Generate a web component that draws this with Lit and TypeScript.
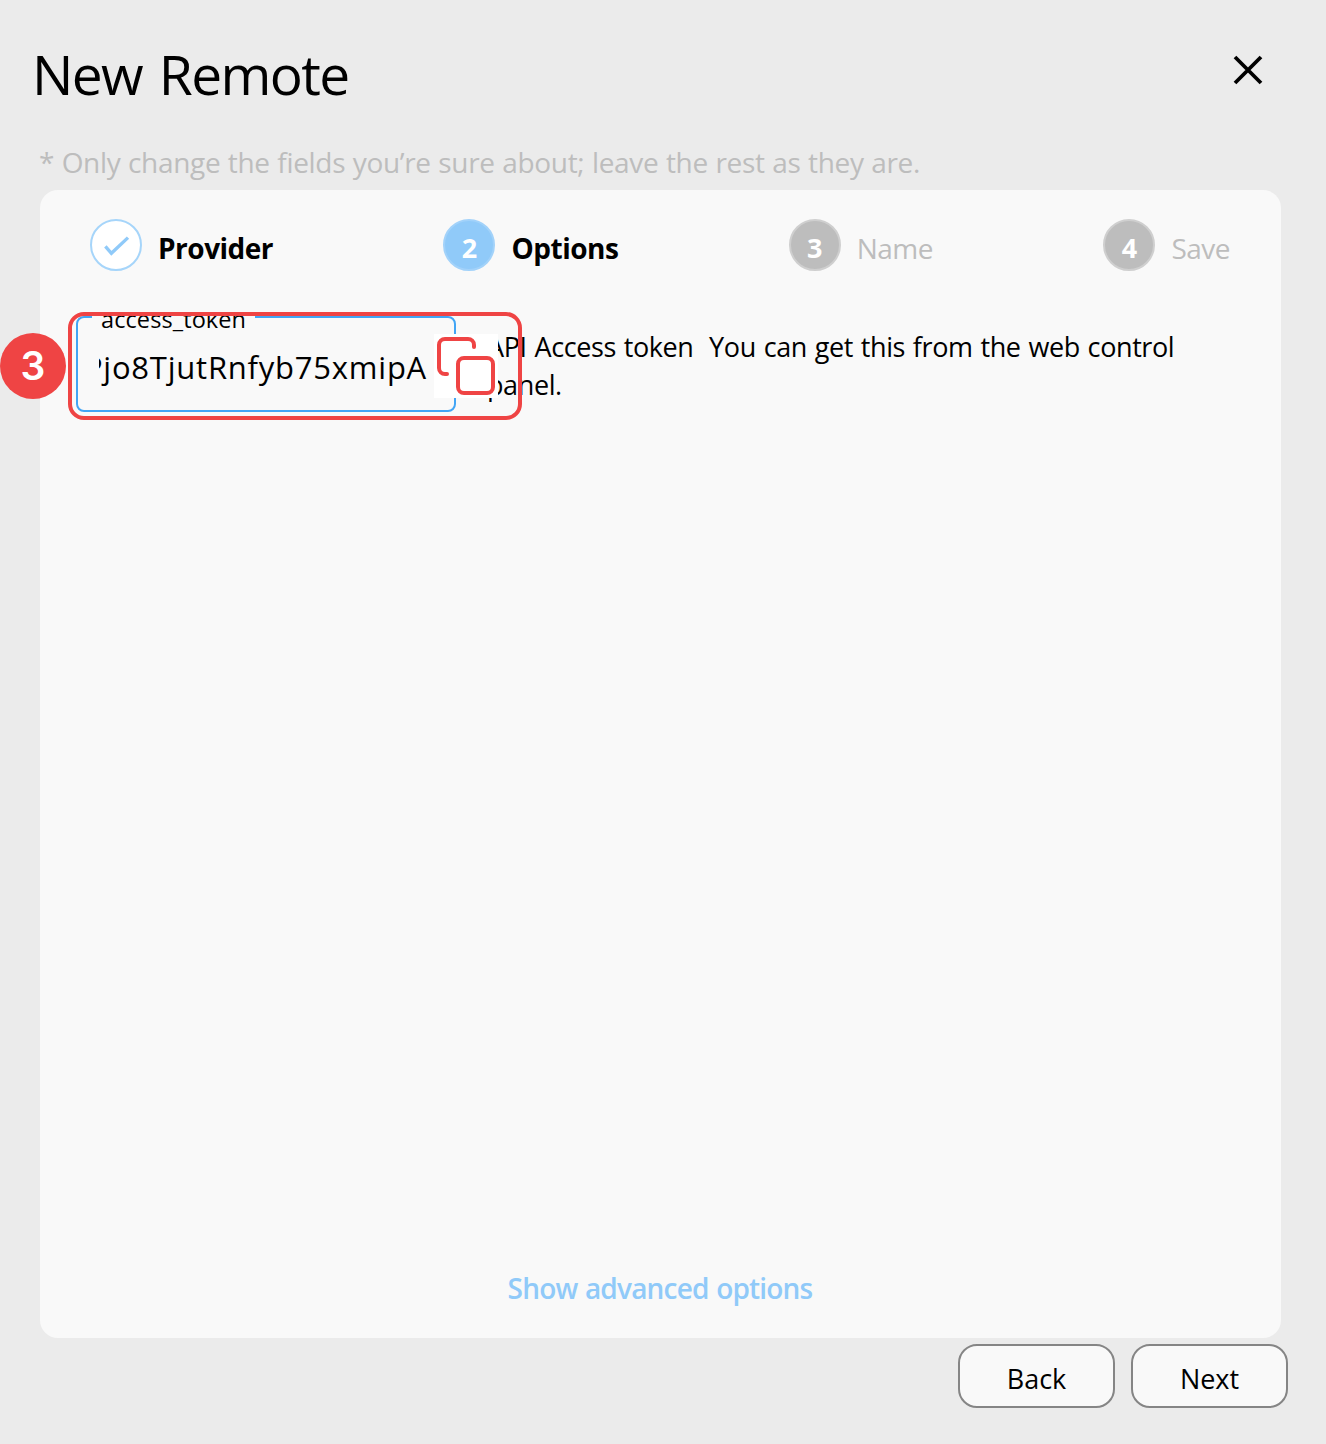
import { LitElement, html, css, svg } from "lit";
import { customElement } from "lit/decorators.js";

type Step = { label: string; state: "done" | "active" | "todo" };

const STEPS: Step[] = [
  { label: "Provider", state: "done" },
  { label: "Options", state: "active" },
  { label: "Name", state: "todo" },
  { label: "Save", state: "todo" },
];

const check = svg`<path d="M14.5 27.5 L21 35 L39 18" fill="none" stroke="#90caf9" stroke-width="3.6"/>`;

@customElement("app-root")
export class AppRoot extends LitElement {
  static styles = css`
    :host {
      display: block;
      font-family: "Open Sans", "Noto Sans", sans-serif;
      color: #000;
    }
    * { box-sizing: border-box; }
    .page {
      width: 1326px;
      height: 1444px;
      background: #ebebeb;
      display: flex;
      flex-direction: column;
      overflow: hidden;
    }
    .header {
      height: 150px;
      padding: 35px 61px 0 32px;
      display: flex;
      justify-content: space-between;
      align-items: flex-start;
    }
    .title {
      margin: 0;
      font-size: 55px;
      line-height: 78px;
      font-weight: 400;
      letter-spacing: -1.6px;
      word-spacing: 4px;
      white-space: nowrap;
    }
    .close {
      display: block;
      width: 34px;
      height: 34px;
      margin-top: 18px;
    }
    .note {
      height: 40px;
      padding-left: 39px;
      margin: 0;
      font-size: 28px;
      line-height: 24px;
      letter-spacing: -0.32px;
      word-spacing: 0.6px;
      color: #bdbdbd;
      white-space: nowrap;
    }
    .panel {
      position: relative;
      height: 1148px;
      margin: 0 45px 0 40px;
      background: #f9f9f9;
      border-radius: 18px;
      display: flex;
      flex-direction: column;
    }
    .steps {
      display: flex;
      justify-content: space-between;
      padding: 29px 51px 0 50px;
    }
    .step {
      display: flex;
      align-items: center;
      gap: 16px;
      height: 52px;
      font-size: 28px;
      letter-spacing: -0.5px;
      white-space: nowrap;
    }
    .dot {
      width: 52px;
      height: 52px;
      border-radius: 50%;
      display: flex;
      align-items: center;
      justify-content: center;
      font-size: 27px;
      font-weight: 700;
      letter-spacing: 0;
      color: #fff;
      padding-top: 4px;
      border: 2px solid #cfcfcf;
      background: #bdbdbd;
    }
    .dot svg { display: block; }
    .label { padding-top: 6px; color: #bdbdbd; }
    .done .label, .active .label { color: #000; font-weight: 700; }
    .done .dot { background: #fff; border-color: #a6d5fa; padding-top: 0; }
    .active .dot { background: #90caf9; border-color: #a2d2fa; }
    .row {
      display: flex;
      padding: 45px 0 0 36px;
    }
    .field {
      position: relative;
      width: 380px;
      height: 96px;
      border: 2px solid #42a5f5;
      border-radius: 8px;
      padding: 0 27px 0 21px;
    }
    .legend {
      position: absolute;
      left: 14px;
      top: -2px;
      width: 163px;
      height: 20px;
      overflow: hidden;
      background: #f9f9f9;
      padding-left: 9px;
      font-size: 23.5px;
      line-height: 6px;
      letter-spacing: 0.1px;
      white-space: nowrap;
    }
    .value {
      height: 92px;
      overflow: hidden;
      display: flex;
      justify-content: flex-end;
      align-items: center;
      font-size: 31px;
      letter-spacing: 0.77px;
      padding-top: 6px;
      white-space: nowrap;
    }
    .help {
      margin: 12px 0 0 31px;
      font-size: 27px;
      line-height: 38px;
      letter-spacing: -0.4px;
      word-spacing: 1.2px;
      white-space: pre;
    }
    .advanced {
      margin-top: auto;
      padding-bottom: 30px;
      padding-right: 1px;
      text-align: center;
      font-size: 28px;
      line-height: 40px;
      font-weight: 650;
      letter-spacing: -0.8px;
      word-spacing: 1px;
      color: #90caf9;
    }
    .outline {
      position: absolute;
      left: 28px;
      top: 122px;
      width: 454px;
      height: 108px;
      border: 4px solid #ef4444;
      border-radius: 16px;
    }
    .marker {
      position: absolute;
      left: -40px;
      top: 143px;
      width: 66px;
      height: 66px;
      border-radius: 50%;
      background: #ef4444;
      color: #fff;
      font: 600 39px/66px Inter, sans-serif;
      text-align: center;
    }
    .copy {
      position: absolute;
      left: 394px;
      top: 144px;
      width: 64px;
      height: 64px;
      background: #fff;
    }
    .copy svg { display: block; }
    .actions {
      display: flex;
      justify-content: flex-end;
      gap: 16px;
      padding: 6px 38px 0 0;
    }
    .btn {
      width: 157px;
      height: 64px;
      border: 2px solid #858585;
      border-radius: 19px;
      background: #f9f9f9;
      color: #000;
      font: 500 27px/36px "Open Sans", "Noto Sans", sans-serif;
      padding: 5px 0 0;
    }
  `;

  render() {
    return html`
      <main class="page">
        <header class="header">
          <h1 class="title">New Remote</h1>
          <svg class="close" viewBox="0 0 34 34">
            <path d="M4 4 L30 30 M30 4 L4 30" stroke="#000" stroke-width="3.8" />
          </svg>
        </header>
        <p class="note">* Only change the fields you’re sure about; leave the rest as they are.</p>
        <section class="panel">
          <div class="steps">
            ${STEPS.map(
              (s, i) => html`<div class="step ${s.state}">
                <span class="dot">${s.state === "done"
                  ? html`<svg width="52" height="52" viewBox="0 0 52 52">${check}</svg>`
                  : i + 1}</span>
                <span class="label">${s.label}</span>
              </div>`
            )}
          </div>
          <div class="row">
            <div class="field">
              <span class="legend">access_token</span>
              <div class="value">Pjo8TjutRnfyb75xmipA</div>
            </div>
            <div class="help">API Access token  You can get this from the web control
panel.</div>
          </div>
          <div class="advanced">Show advanced options</div>
          <div class="copy">
            <svg width="64" height="64" viewBox="0 0 64 64" fill="none" stroke="#ef4444" stroke-width="4" stroke-linecap="round">
              <path d="M13 40 H11 A6 6 0 0 1 5 34 V11 A6 6 0 0 1 11 5 H34 A6 6 0 0 1 40 11 V13" />
              <rect x="24" y="24" width="35" height="35" rx="6" />
            </svg>
          </div>
          <div class="outline"></div>
          <div class="marker">3</div>
        </section>
        <footer class="actions">
          <button class="btn">Back</button>
          <button class="btn">Next</button>
        </footer>
      </main>
    `;
  }
}
